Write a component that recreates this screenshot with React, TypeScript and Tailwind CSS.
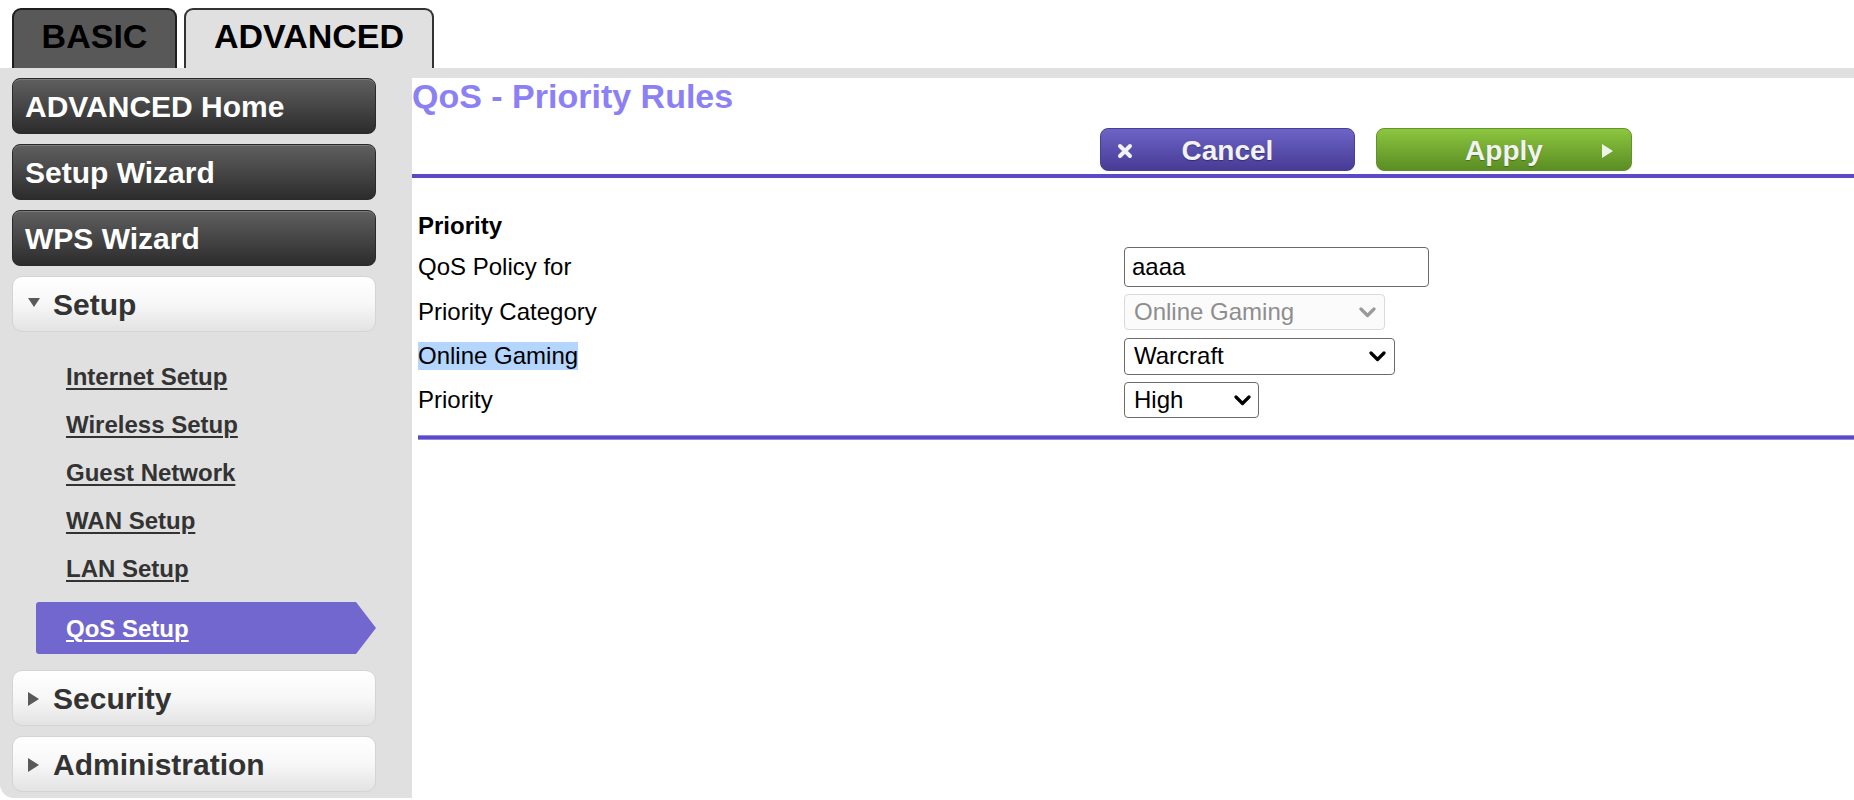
import React from "react";

function DarkBtn({ label }: { label: string }) {
  return (
    <div className="h-[56px] w-[364px] rounded-[8px] bg-linear-to-b from-[#5f5f5f] via-[#464646] to-[#2c2c2c] border border-[#2a2a2a] pl-[12px] pt-[13px] text-[30px] leading-[30px] font-bold text-white shadow-[inset_0_1px_0_rgba(255,255,255,0.18)]">
      {label}
    </div>
  );
}

function LightBtn({ label, open }: { label: string; open?: boolean }) {
  return (
    <div className="h-[56px] w-[364px] rounded-[10px] bg-linear-to-b from-white via-[#f7f7f7] to-[#e3e3e3] border border-[#d4d4d4] flex items-start pt-[13px] text-[30px] leading-[30px] font-bold text-[#333]">
      <div className="w-[40px] pl-[15px] pt-[8px] flex">
        {open ? (
          <svg width="12" height="9" viewBox="0 0 12 9">
            <polygon points="0,0 12,0 6,9" fill="#5a5a5a" />
          </svg>
        ) : (
          <svg width="11" height="14" viewBox="0 0 11 14">
            <polygon points="0,0 11,7 0,14" fill="#5a5a5a" />
          </svg>
        )}
      </div>
      <span>{label}</span>
    </div>
  );
}

function SubLink({ label }: { label: string }) {
  return (
    <div className="h-[48px] pl-[66px] pt-[1px] text-[24px] leading-[48px] font-bold text-[#333]">
      <span className="underline decoration-2 underline-offset-[3px]">{label}</span>
    </div>
  );
}

function Chevron({ color }: { color: string }) {
  return (
    <svg width="17" height="11" viewBox="0 0 17 11">
      <polyline
        points="2,2 8.5,8.5 15,2"
        fill="none"
        stroke={color}
        strokeWidth="3.2"
        strokeLinecap="round"
        strokeLinejoin="round"
      />
    </svg>
  );
}

export default function App() {
  return (
    <div className="w-[1854px] h-[800px] bg-white overflow-hidden font-['Liberation_Sans',Arial,Helvetica,sans-serif] text-black">
      {/* Tabs */}
      <div className="h-[68px] flex items-end pl-[12px] gap-[7px]">
        <div className="w-[165px] h-[60px] bg-[#585858] border-2 border-b-0 border-[#1e1e1e] rounded-t-[9px] flex items-center justify-center pb-[5px] text-[34px] font-bold text-black">
          BASIC
        </div>
        <div className="w-[250px] h-[60px] bg-[#e0e0e0] border-2 border-b-0 border-[#333] rounded-t-[9px] flex items-center justify-center pb-[5px] text-[34px] font-bold text-black">
          ADVANCED
        </div>
      </div>
      <div className="h-[10px] bg-[#e0e0e0]" />

      <div className="flex">
        {/* Sidebar */}
        <aside className="w-[412px] h-[720px] bg-[#e0e0e0] rounded-bl-[14px] pl-[12px] flex flex-col">
          <DarkBtn label="ADVANCED Home" />
          <div className="mt-[10px]">
            <DarkBtn label="Setup Wizard" />
          </div>
          <div className="mt-[10px]">
            <DarkBtn label="WPS Wizard" />
          </div>
          <div className="mt-[10px]">
            <LightBtn label="Setup" open />
          </div>
          <div className="mt-[20px] -ml-[12px] flex flex-col">
            <SubLink label="Internet Setup" />
            <SubLink label="Wireless Setup" />
            <SubLink label="Guest Network" />
            <SubLink label="WAN Setup" />
            <SubLink label="LAN Setup" />
          </div>
          <div className="mt-[10px] ml-[24px] w-[340px] h-[52px] bg-[#7267ce] pl-[30px] pt-[1px] text-[24px] leading-[52px] font-bold text-white [clip-path:polygon(0_0,calc(100%-20px)_0,100%_50%,calc(100%-20px)_100%,0_100%)] rounded-l-[3px]">
            <span className="underline decoration-2 underline-offset-[3px]">QoS Setup</span>
          </div>
          <div className="mt-[16px]">
            <LightBtn label="Security" />
          </div>
          <div className="mt-[10px]">
            <LightBtn label="Administration" />
          </div>
        </aside>

        {/* Main */}
        <main className="flex-1 bg-white">
          <div className="pt-[1px] text-[34px] leading-[34px] font-bold text-[#8b80f4]">QoS - Priority Rules</div>

          <div className="mt-[15px] ml-[688px] flex gap-[21px] h-[43px]">
            <div className="w-[255px] h-[43px] rounded-[8px] bg-linear-to-b from-[#6d64c6] to-[#473b96] border border-[#4a3f98] grid grid-cols-[48px_1fr_48px] items-center text-[28px] font-bold text-[#f2f2f2] [text-shadow:0_1px_1px_rgba(0,0,0,0.35)]">
              <div className="flex justify-center">
                <svg width="16" height="16" viewBox="0 0 16 16">
                  <path d="M3 3L13 13M13 3L3 13" stroke="#f2f2f2" strokeWidth="4" strokeLinecap="round" />
                </svg>
              </div>
              <div className="text-center pt-[1px]">Cancel</div>
              <div />
            </div>
            <div className="w-[256px] h-[43px] rounded-[8px] bg-linear-to-b from-[#8dc63f] to-[#5a8e24] border border-[#5f9428] grid grid-cols-[48px_1fr_48px] items-center text-[28px] font-bold text-[#f2f2f2] [text-shadow:0_1px_1px_rgba(0,0,0,0.3)]">
              <div />
              <div className="text-center pt-[1px]">Apply</div>
              <div className="flex justify-center">
                <svg width="11" height="14" viewBox="0 0 11 14">
                  <polygon points="0,0 11,7 0,14" fill="#eef5e6" />
                </svg>
              </div>
            </div>
          </div>

          <div className="mt-[3px] h-[4px] bg-[#5a4ac8]" />

          <div className="pl-[6px]">
            <div className="mt-[34px] text-[24px] leading-[28px] font-bold">Priority</div>

            <div className="mt-[4px] flex flex-col">
              <div className="flex items-center h-[46px]">
                <div className="w-[706px] text-[24px]">QoS Policy for</div>
                <div className="w-[305px] h-[40px] border-[1.5px] border-[#6b6b6b] rounded-[4px] pl-[7px] flex items-center text-[24px] bg-white">
                  aaaa
                </div>
              </div>
              <div className="flex items-center h-[44px]">
                <div className="w-[706px] text-[24px]">Priority Category</div>
                <div className="w-[261px] h-[36px] border-[1.5px] border-[#dadada] rounded-[4px] pl-[9px] pr-[8px] flex items-center justify-between text-[24px] text-[#8e8e8e] bg-[#fbfbfb]">
                  <span>Online Gaming</span>
                  <Chevron color="#9a9a9a" />
                </div>
              </div>
              <div className="flex items-center h-[44px]">
                <div className="w-[706px] text-[24px]">
                  <span className="bg-[#b4d5fe] leading-[28px] inline-block">Online Gaming</span>
                </div>
                <div className="w-[271px] h-[37px] border-[1.5px] border-[#6b6b6b] rounded-[4px] pl-[9px] pr-[8px] flex items-center justify-between text-[24px] bg-white">
                  <span>Warcraft</span>
                  <Chevron color="#000" />
                </div>
              </div>
              <div className="flex items-center h-[44px]">
                <div className="w-[706px] text-[24px]">Priority</div>
                <div className="w-[135px] h-[36px] border-[1.5px] border-[#6b6b6b] rounded-[4px] pl-[9px] pr-[7px] flex items-center justify-between text-[24px] bg-white">
                  <span>High</span>
                  <Chevron color="#000" />
                </div>
              </div>
            </div>

            <div className="mt-[13px] h-[5px] border-y border-[#9088e4] bg-[#5a4ac8]" />
          </div>
        </main>
      </div>
    </div>
  );
}
